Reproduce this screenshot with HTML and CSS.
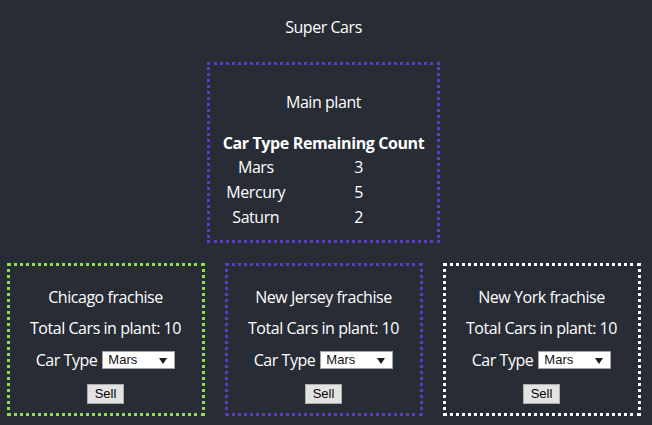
FILE: index.html
```html
<!DOCTYPE html>
<html lang="en">
<head>
<meta charset="utf-8">
<title>Super Cars</title>
<link rel="stylesheet" href="styles.css">
</head>
<body>
<div class="app">
  <header class="title">Super Cars</header>

  <section class="main-plant">
    <div class="plant-name">Main plant</div>
    <table class="stock">
      <thead>
        <tr><th>Car Type</th><th>Remaining Count</th></tr>
      </thead>
      <tbody>
        <tr><td>Mars</td><td>3</td></tr>
        <tr><td>Mercury</td><td>5</td></tr>
        <tr><td>Saturn</td><td>2</td></tr>
      </tbody>
    </table>
  </section>

  <div class="franchises">
    <section class="franchise franchise-green">
      <div class="f-name">Chicago frachise</div>
      <div class="f-total">Total Cars in plant: 10</div>
      <div class="f-type">Car Type <span class="select-wrap"><select class="car-select"><option>Mars</option><option>Mercury</option><option>Saturn</option></select></span></div>
      <div class="f-action"><button class="sell">Sell</button></div>
    </section>
    <section class="franchise franchise-purple">
      <div class="f-name">New Jersey frachise</div>
      <div class="f-total">Total Cars in plant: 10</div>
      <div class="f-type">Car Type <span class="select-wrap"><select class="car-select"><option>Mars</option><option>Mercury</option><option>Saturn</option></select></span></div>
      <div class="f-action"><button class="sell">Sell</button></div>
    </section>
    <section class="franchise franchise-white">
      <div class="f-name">New York frachise</div>
      <div class="f-total">Total Cars in plant: 10</div>
      <div class="f-type">Car Type <span class="select-wrap"><select class="car-select"><option>Mars</option><option>Mercury</option><option>Saturn</option></select></span></div>
      <div class="f-action"><button class="sell">Sell</button></div>
    </section>
  </div>
</div>
</body>
</html>
```

FILE: styles.css
```css
html, body {
  margin: 0;
  padding: 0;
  background: #282c34;
}

body {
  color: #ffffff;
  font-family: "Open Sans", "Noto Sans", sans-serif;
  font-size: 16px;
  line-height: 22px;
  letter-spacing: -0.45px;
}

.app {
  width: 647px;
  text-align: center;
}

.title {
  padding-top: 16px;
  height: 22px;
}

.main-plant {
  box-sizing: border-box;
  width: 233px;
  height: 181px;
  margin: 24px auto 0;
  border: 3px dotted #5b3cc6;
  padding-top: 26px;
}

.plant-name {
  height: 22px;
}

.stock {
  margin: 18px auto 0;
  border-collapse: collapse;
  border-spacing: 0;
}

.stock th,
.stock td {
  padding: 0 2px;
  height: 25px;
  line-height: 25px;
}

.stock th {
  font-weight: 700;
  letter-spacing: -0.4px;
}

.stock tbody tr:first-child td {
  height: 24px;
  line-height: 23px;
  vertical-align: top;
}

.franchises {
  display: flex;
  justify-content: center;
  gap: 20px;
  margin-top: 20px;
}

.franchise {
  box-sizing: border-box;
  width: 198px;
  height: 153px;
  border: 3px dotted #ffffff;
  padding-top: 20px;
}

.franchise-green { border-color: #94dd4f; }
.franchise-purple { border-color: #5b3cc6; }
.franchise-white { border-color: #ffffff; }

.f-name,
.f-total {
  height: 22px;
}

.f-total {
  margin-top: 9px;
}

.f-type {
  margin-top: 10px;
  height: 22px;
  display: flex;
  justify-content: center;
  align-items: center;
  gap: 5px;
}

.select-wrap {
  position: relative;
  display: inline-block;
  height: 18px;
}

.select-wrap::after {
  content: "";
  position: absolute;
  right: 8px;
  top: 7px;
  border-left: 4px solid transparent;
  border-right: 4px solid transparent;
  border-top: 6px solid #1a1a1a;
  pointer-events: none;
}

.car-select {
  -webkit-appearance: none;
  appearance: none;
  box-sizing: border-box;
  width: 73px;
  height: 18px;
  margin: 0;
  padding: 0 0 0 5px;
  border: 1px solid #a4a4a4;
  border-radius: 0;
  background: #ffffff;
  color: #111111;
  font-family: "Liberation Sans", Arial, sans-serif;
  font-size: 13px;
  letter-spacing: 0;
  line-height: 16px;
  display: block;
}

.f-action {
  margin-top: 10px;
  height: 20px;
}

.sell {
  box-sizing: border-box;
  width: 37px;
  height: 20px;
  margin: 0;
  padding: 0;
  border: 1px solid #adadad;
  border-radius: 0;
  background: #e3e3e3;
  color: #000000;
  font-family: "Liberation Sans", Arial, sans-serif;
  font-size: 13px;
  letter-spacing: 0;
  line-height: 18px;
}
```
